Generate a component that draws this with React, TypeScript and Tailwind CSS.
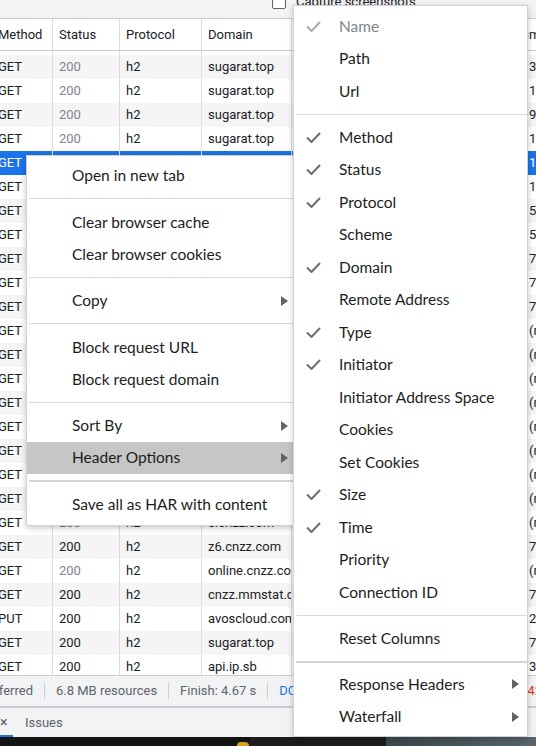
import React from "react";

type Row = {
  method: string;
  status: string;
  dim?: boolean;
  proto: string;
  domain: string;
  tail: string;
  selected?: boolean;
};

const rows: Row[] = [
  { method: "GET", status: "200", dim: true, proto: "h2", domain: "sugarat.top", tail: "3" },
  { method: "GET", status: "200", dim: true, proto: "h2", domain: "sugarat.top", tail: "1" },
  { method: "GET", status: "200", dim: true, proto: "h2", domain: "sugarat.top", tail: "9" },
  { method: "GET", status: "200", dim: true, proto: "h2", domain: "sugarat.top", tail: "1" },
  { method: "GET", status: "200", dim: true, proto: "h2", domain: "sugarat.top", tail: "1", selected: true },
  { method: "GET", status: "200", dim: true, proto: "h2", domain: "sugarat.top", tail: "1" },
  { method: "GET", status: "200", dim: true, proto: "h2", domain: "sugarat.top", tail: "5" },
  { method: "GET", status: "200", dim: true, proto: "h2", domain: "sugarat.top", tail: "5" },
  { method: "GET", status: "200", dim: true, proto: "h2", domain: "sugarat.top", tail: "7" },
  { method: "GET", status: "200", dim: true, proto: "h2", domain: "sugarat.top", tail: "7" },
  { method: "GET", status: "200", dim: true, proto: "h2", domain: "sugarat.top", tail: "7" },
  { method: "GET", status: "200", dim: true, proto: "h2", domain: "sugarat.top", tail: "(memory cache)" },
  { method: "GET", status: "200", dim: true, proto: "h2", domain: "sugarat.top", tail: "(memory cache)" },
  { method: "GET", status: "200", dim: true, proto: "h2", domain: "sugarat.top", tail: "(memory cache)" },
  { method: "GET", status: "200", dim: true, proto: "h2", domain: "sugarat.top", tail: "(memory cache)" },
  { method: "GET", status: "200", dim: true, proto: "h2", domain: "sugarat.top", tail: "(memory cache)" },
  { method: "GET", status: "200", dim: true, proto: "h2", domain: "sugarat.top", tail: "(memory cache)" },
  { method: "GET", status: "200", dim: true, proto: "h2", domain: "sugarat.top", tail: "(memory cache)" },
  { method: "GET", status: "200", dim: true, proto: "h2", domain: "sugarat.top", tail: "(memory cache)" },
  { method: "GET", status: "200", dim: true, proto: "h2", domain: "c.cnzz.com", tail: "(memory cache)" },
  { method: "GET", status: "200", proto: "h2", domain: "z6.cnzz.com", tail: "7" },
  { method: "GET", status: "200", dim: true, proto: "h2", domain: "online.cnzz.com", tail: "(memory cache)" },
  { method: "GET", status: "200", proto: "h2", domain: "cnzz.mmstat.com", tail: "7" },
  { method: "PUT", status: "200", proto: "h2", domain: "avoscloud.com", tail: "2" },
  { method: "GET", status: "200", proto: "h2", domain: "sugarat.top", tail: "7" },
  { method: "GET", status: "200", proto: "h2", domain: "api.ip.sb", tail: "3" },
];

// column widths, first column starts scrolled 8px off screen
const cols = ["w-[61px]", "w-[67px]", "w-[82px]", "w-[90px]", "w-[70px]", "w-[90px]", "w-[71px]", "w-[80px]"];

type LeftItem = { label?: string; arrow?: boolean; active?: boolean; sep?: "thin" | "thick" };

const leftMenu: LeftItem[] = [
  { label: "Open in new tab" },
  { sep: "thin" },
  { label: "Clear browser cache" },
  { label: "Clear browser cookies" },
  { sep: "thin" },
  { label: "Copy", arrow: true },
  { sep: "thin" },
  { label: "Block request URL" },
  { label: "Block request domain" },
  { sep: "thin" },
  { label: "Sort By", arrow: true },
  { label: "Header Options", arrow: true, active: true },
  { sep: "thick" },
  { label: "Save all as HAR with content" },
];

type RightItem = { label?: string; checked?: boolean; disabled?: boolean; arrow?: boolean; sep?: "thin" | "thick" };

const rightMenu: RightItem[] = [
  { label: "Name", checked: true, disabled: true },
  { label: "Path" },
  { label: "Url" },
  { sep: "thin" },
  { label: "Method", checked: true },
  { label: "Status", checked: true },
  { label: "Protocol", checked: true },
  { label: "Scheme" },
  { label: "Domain", checked: true },
  { label: "Remote Address" },
  { label: "Type", checked: true },
  { label: "Initiator", checked: true },
  { label: "Initiator Address Space" },
  { label: "Cookies" },
  { label: "Set Cookies" },
  { label: "Size", checked: true },
  { label: "Time", checked: true },
  { label: "Priority" },
  { label: "Connection ID" },
  { sep: "thin" },
  { label: "Reset Columns" },
  { sep: "thick" },
  { label: "Response Headers", arrow: true },
  { label: "Waterfall", arrow: true },
];

function Arrow() {
  return (
    <svg width="7" height="10" viewBox="0 0 7 10" className="shrink-0">
      <polygon points="0,0 7,5 0,10" fill="#5f6368" />
    </svg>
  );
}

function Check({ faded }: { faded?: boolean }) {
  return (
    <svg width="15" height="11" viewBox="0 0 15 11" className="shrink-0">
      <polyline
        points="1,5.5 5.5,10 14,1"
        fill="none"
        stroke={faded ? "#a8abb0" : "#6b6e73"}
        strokeWidth="2"
      />
    </svg>
  );
}

function TableRow({ r, i }: { r: Row; i: number }) {
  const bg = r.selected ? "bg-[#1a73e8] text-white" : i % 2 === 0 ? "bg-[#f5f5f5]" : "bg-white";
  const statusColor = r.selected ? "text-white" : r.dim ? "text-[#80868b]" : "text-[#202124]";
  const cell = "shrink-0 h-full flex items-center pl-[6px] overflow-hidden whitespace-nowrap border-r border-[#dadce0]";
  return (
    <div className={`flex h-[24px] ${bg}`}>
      <div className={`${cols[0]} ${cell}`}>{r.method}</div>
      <div className={`${cols[1]} ${cell} ${statusColor}`}>{r.status}</div>
      <div className={`${cols[2]} ${cell}`}>{r.proto}</div>
      <div className={`${cols[3]} ${cell}`}>{r.domain}</div>
      <div className={`${cols[4]} ${cell}`}>script</div>
      <div className={`${cols[5]} ${cell}`}>(index)</div>
      <div className={`${cols[6]} ${cell}`}>1.2 kB</div>
      <div className={`${cols[7]} ${cell}`}>{r.tail}</div>
    </div>
  );
}

export default function App() {
  const cell = "shrink-0 h-full flex items-center pl-[6px] overflow-hidden whitespace-nowrap border-r border-[#dadce0]";
  const headers = ["Method", "Status", "Protocol", "Domain", "Type", "Initiator", "Size", "Time"];

  return (
    <div className="relative w-[536px] h-[746px] overflow-hidden bg-white text-[13px] text-[#202124] font-['Roboto','Liberation_Sans',sans-serif]">
      {/* toolbar */}
      <div className="h-[19px] bg-[#f1f3f4] border-b border-[#cacdd1] overflow-hidden">
        <div className="flex items-center h-[14px] -mt-[5px] pl-[272px] gap-[10px]">
          <div className="w-[14px] h-[14px] rounded-[2px] border-[1.5px] border-[#5f6368] bg-white" />
          <span className="whitespace-nowrap text-[#202124]">Capture screenshots</span>
        </div>
      </div>

      {/* table */}
      <div className="h-[656px] overflow-hidden">
        <div className="-ml-[8px]">
          <div className="flex h-[32px] border-b border-[#cacdd1] bg-white">
            {headers.map((h, i) => (
              <div key={h} className={`${cols[i]} ${cell}`}>
                <span className={i === 7 ? "-ml-[11px]" : ""}>{h}</span>
              </div>
            ))}
          </div>
          <div className="flex h-[4px]">
            {cols.map((c) => (
              <div key={c} className={`${c} shrink-0 h-full border-r border-[#dadce0]`} />
            ))}
          </div>
          {rows.map((r, i) => (
            <TableRow key={i} r={r} i={i} />
          ))}
        </div>
      </div>

      {/* summary bar */}
      <div className="h-[31px] border-t border-[#cacdd1] bg-[#f1f3f4] flex items-center text-[#5f6368] whitespace-nowrap">
        <div className="w-[33px] overflow-hidden flex justify-end shrink-0">
          <span className="whitespace-nowrap">1.4 MB transferred</span>
        </div>
        <div className="w-px h-[16px] bg-[#cacdd1] mx-[11px] shrink-0" />
        <span>6.8 MB resources</span>
        <div className="w-px h-[16px] bg-[#cacdd1] mx-[11px] shrink-0" />
        <span>Finish: 4.67 s</span>
        <div className="w-px h-[16px] bg-[#cacdd1] mx-[11px] shrink-0" />
        <span className="text-[#1a73e8]">DOMContentLoaded: 1.31 s</span>
        <div className="w-px h-[16px] bg-[#cacdd1] mx-[11px] shrink-0" />
        <span className="text-[#d93025] pl-[20px]">Load: 4.42 s</span>
      </div>

      {/* drawer tabs */}
      <div className="h-[31px] border-t-2 border-[#cacdd1] bg-[#f1f3f4] flex items-stretch text-[#5f6368]">
        <div className="w-[13px] flex items-center border-b-2 border-[#1a73e8] overflow-hidden">
          <span className="text-[14px] leading-none">×</span>
        </div>
        <div className="flex items-center pl-[12px]">Issues</div>
      </div>

      {/* desktop strip */}
      <div className="h-[9px] flex">
        <div className="w-[236px] bg-[#141414]" />
        <div className="w-[14px] bg-[#141414] flex justify-center">
          <div className="w-[12px] h-[4px] mt-[5px] rounded-t-full bg-[#d9a21b]" />
        </div>
        <div className="w-[136px] bg-[#1c1c1c]" />
        <div className="flex-1 bg-gradient-to-r from-[#3a474c] to-[#56666c]" />
      </div>

      {/* context menu */}
      <div className="absolute left-[26px] top-[155px] w-[271px] bg-white border border-[#d2d2d2] shadow-[0_2px_6px_rgba(0,0,0,0.22)] py-[4px] font-['Lato','Noto_Sans',sans-serif] text-[15.5px] text-[#1c1d22]">
        {leftMenu.map((it, i) =>
          it.sep ? (
            <div key={i} className="h-[14.5px] flex flex-col pl-[2px]">
              <div className={`mt-[6px] ${it.sep === "thick" ? "h-[2px] bg-[#d4d4d4]" : "h-px bg-[#dadada]"}`} />
            </div>
          ) : (
            <div
              key={i}
              className={`h-[32px] flex items-center pl-[45px] pr-[8px] ${it.active ? "bg-[#c6c6c6]" : ""}`}
            >
              <span className="flex-1 whitespace-nowrap">{it.label}</span>
              {it.arrow && <Arrow />}
            </div>
          )
        )}
      </div>

      {/* header options submenu */}
      <div className="absolute left-[293px] top-[5px] w-[235px] bg-white border border-[#d2d2d2] shadow-[0_2px_6px_rgba(0,0,0,0.22)] pt-[4px] pb-[3px] font-['Lato','Noto_Sans',sans-serif] text-[15.5px] text-[#1c1d22]">
        {rightMenu.map((it, i) =>
          it.sep ? (
            <div key={i} className="h-[13.5px] flex flex-col pl-[2px]">
              <div className={`mt-[6px] ${it.sep === "thick" ? "h-[2px] bg-[#d4d4d4]" : "h-px bg-[#dadada]"}`} />
            </div>
          ) : (
            <div key={i} className="h-[32.5px] flex items-center pr-[8px]">
              <div className="w-[45px] pl-[12px] shrink-0 flex items-center">
                {it.checked && <Check faded={it.disabled} />}
              </div>
              <span className={`flex-1 whitespace-nowrap ${it.disabled ? "text-[#80868b]" : ""}`}>{it.label}</span>
              {it.arrow && <Arrow />}
            </div>
          )
        )}
      </div>
    </div>
  );
}
